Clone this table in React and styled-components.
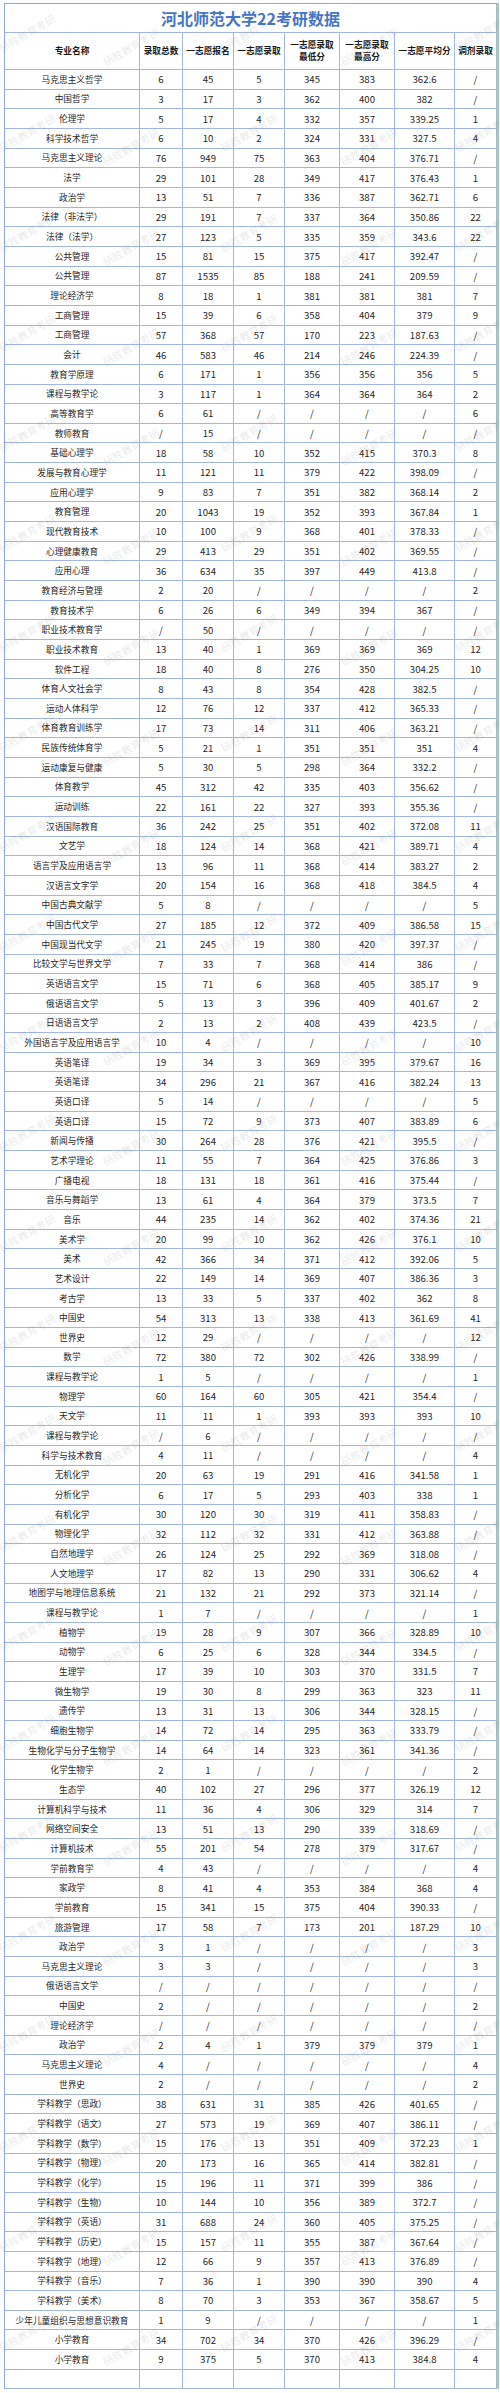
import styled, { createGlobalStyle } from 'styled-components'

const GlobalStyle = createGlobalStyle`
    html, body {
        margin: 0;
        padding: 0;
        background: #ffffff;
    }
    body {
        font-family: "Noto Sans CJK SC", "Noto Sans", sans-serif;
        color: #222222;
    }
`

const COLUMNS = '135px 43px 51px 51px 55px 55px 60px 42px'
const LINE = '#a3b6e3'

const HEADERS = [
    ['专业名称'],
    ['录取总数'],
    ['一志愿报名'],
    ['一志愿录取'],
    ['一志愿录取', '最低分'],
    ['一志愿录取', '最高分'],
    ['一志愿平均分'],
    ['调剂录取'],
]

const RAW = `马克思主义哲学 6 45 5 345 383 362.6 /
中国哲学 3 17 3 362 400 382 /
伦理学 5 17 4 332 357 339.25 1
科学技术哲学 6 10 2 324 331 327.5 4
马克思主义理论 76 949 75 363 404 376.71 /
法学 29 101 28 349 417 376.43 1
政治学 13 51 7 336 387 362.71 6
法律（非法学） 29 191 7 337 364 350.86 22
法律（法学） 27 123 5 335 359 343.6 22
公共管理 15 81 15 375 417 392.47 /
公共管理 87 1535 85 188 241 209.59 /
理论经济学 8 18 1 381 381 381 7
工商管理 15 39 6 358 404 379 9
工商管理 57 368 57 170 223 187.63 /
会计 46 583 46 214 246 224.39 /
教育学原理 6 171 1 356 356 356 5
课程与教学论 3 117 1 364 364 364 2
高等教育学 6 61 / / / / 6
教师教育 / 15 / / / / /
基础心理学 18 58 10 352 415 370.3 8
发展与教育心理学 11 121 11 379 422 398.09 /
应用心理学 9 83 7 351 382 368.14 2
教育管理 20 1043 19 352 393 367.84 1
现代教育技术 10 100 9 368 401 378.33 /
心理健康教育 29 413 29 351 402 369.55 /
应用心理 36 634 35 397 449 413.8 /
教育经济与管理 2 20 / / / / 2
教育技术学 6 26 6 349 394 367 /
职业技术教育学 / 50 / / / / /
职业技术教育 13 40 1 369 369 369 12
软件工程 18 40 8 276 350 304.25 10
体育人文社会学 8 43 8 354 428 382.5 /
运动人体科学 12 76 12 337 412 365.33 /
体育教育训练学 17 73 14 311 406 363.21 /
民族传统体育学 5 21 1 351 351 351 4
运动康复与健康 5 30 5 298 364 332.2 /
体育教学 45 312 42 335 403 356.62 /
运动训练 22 161 22 327 393 355.36 /
汉语国际教育 36 242 25 351 402 372.08 11
文艺学 18 124 14 368 421 389.71 4
语言学及应用语言学 13 96 11 368 414 383.27 2
汉语言文字学 20 154 16 368 418 384.5 4
中国古典文献学 5 8 / / / / 5
中国古代文学 27 185 12 372 409 386.58 15
中国现当代文学 21 245 19 380 420 397.37 /
比较文学与世界文学 7 33 7 368 414 386 /
英语语言文学 15 71 6 368 405 385.17 9
俄语语言文学 5 13 3 396 409 401.67 2
日语语言文学 2 13 2 408 439 423.5 /
外国语言学及应用语言学 10 4 / / / / 10
英语笔译 19 34 3 369 395 379.67 16
英语笔译 34 296 21 367 416 382.24 13
英语口译 5 14 / / / / 5
英语口译 15 72 9 373 407 383.89 6
新闻与传播 30 264 28 376 421 395.5 /
艺术学理论 11 55 7 364 425 376.86 3
广播电视 18 131 18 361 416 375.44 /
音乐与舞蹈学 13 61 4 364 379 373.5 7
音乐 44 235 14 362 402 374.36 21
美术学 20 99 10 362 426 376.1 10
美术 42 366 34 371 412 392.06 5
艺术设计 22 149 14 369 407 386.36 3
考古学 13 33 5 337 402 362 8
中国史 54 313 13 338 413 361.69 41
世界史 12 29 / / / / 12
数学 72 380 72 302 426 338.99 /
课程与教学论 1 5 / / / / 1
物理学 60 164 60 305 421 354.4 /
天文学 11 11 1 393 393 393 10
课程与教学论 / 6 / / / / /
科学与技术教育 4 11 / / / / 4
无机化学 20 63 19 291 416 341.58 1
分析化学 6 17 5 293 403 338 1
有机化学 30 120 30 319 411 358.83 /
物理化学 32 112 32 331 412 363.88 /
自然地理学 26 124 25 292 369 318.08 /
人文地理学 17 82 13 290 331 306.62 4
地图学与地理信息系统 21 132 21 292 373 321.14 /
课程与教学论 1 7 / / / / 1
植物学 19 28 9 307 366 328.89 10
动物学 6 25 6 328 344 334.5 /
生理学 17 39 10 303 370 331.5 7
微生物学 19 30 8 299 363 323 11
遗传学 13 31 13 306 344 328.15 /
细胞生物学 14 72 14 295 363 333.79 /
生物化学与分子生物学 14 64 14 323 361 341.36 /
化学生物学 2 1 / / / / 2
生态学 40 102 27 296 377 326.19 12
计算机科学与技术 11 36 4 306 329 314 7
网络空间安全 13 51 13 290 339 318.69 /
计算机技术 55 201 54 278 379 317.67 /
学前教育学 4 43 / / / / 4
家政学 8 41 4 353 384 368 4
学前教育 15 341 15 375 404 390.33 /
旅游管理 17 58 7 173 201 187.29 10
政治学 3 1 / / / / 3
马克思主义理论 3 3 / / / / 3
俄语语言文学 / / / / / / /
中国史 2 / / / / / 2
理论经济学 / / / / / / /
政治学 2 4 1 379 379 379 1
马克思主义理论 4 / / / / / 4
世界史 2 / / / / / 2
学科教学（思政） 38 631 31 385 426 401.65 /
学科教学（语文） 27 573 19 369 407 386.11 /
学科教学（数学） 15 176 13 351 409 372.23 1
学科教学（物理） 20 173 16 365 414 382.81 /
学科教学（化学） 15 196 11 371 399 386 /
学科教学（生物） 10 144 10 356 389 372.7 /
学科教学（英语） 31 688 24 360 405 375.25 /
学科教学（历史） 15 157 11 355 387 367.64 /
学科教学（地理） 12 66 9 357 413 376.89 /
学科教学（音乐） 7 36 1 390 390 390 4
学科教学（美术） 8 70 3 353 367 358.67 5
少年儿童组织与思想意识教育 1 9 / / / / 1
小学教育 34 702 34 370 426 396.29 /
小学教育 9 375 5 370 413 384.8 4`

const rows = RAW.split('\n').map(line => line.trim().split(' '))

const WM_X = [-4, 100, 218, 338, 452]
const marks = []
for (let y = 12; y < 2393; y += 100) {
    WM_X.forEach((x, i) => {
        marks.push({ x, y: y + (i % 2 ? 14 : 0) })
    })
}

const App = () => {
    return (
        <Page>
            <GlobalStyle />
            <Sheet>
                <TitleRow>河北师范大学22考研数据</TitleRow>
                <HeaderRow>
                    {HEADERS.map((lines, i) => (
                        <HeadCell key={i}>
                            {lines.map(l => (
                                <span key={l}>{l}</span>
                            ))}
                        </HeadCell>
                    ))}
                </HeaderRow>
                {rows.map((cells, r) => (
                    <Row key={r}>
                        {cells.map((c, i) => (
                            <Cell key={i} $name={i === 0}>
                                {c}
                            </Cell>
                        ))}
                    </Row>
                ))}
                <Row>
                    {HEADERS.map((_, i) => (
                        <Cell key={i} />
                    ))}
                </Row>
            </Sheet>
            <Watermarks>
                {marks.map((m, i) => (
                    <Mark key={i} style={{ left: m.x, top: m.y }}>
                        研胜教育考研
                    </Mark>
                ))}
            </Watermarks>
        </Page>
    )
}

const Page = styled.div`
    position: relative;
    width: 500px;
    height: 2393px;
    padding: 3px 0 0 4px;
    box-sizing: border-box;
    overflow: hidden;
    background: #ffffff;
`

const Sheet = styled.div`
    width: 493px;
    border-top: 1px solid #8ea6dc;
    border-left: 1px solid #8ea6dc;
    box-sizing: border-box;
    box-shadow: 2px 0 0 #a9d18e;
`

const TitleRow = styled.div`
    height: 29px;
    box-sizing: border-box;
    border-bottom: 1px solid ${LINE};
    border-right: 1px solid ${LINE};
    display: flex;
    align-items: center;
    justify-content: center;
    font-size: 16px;
    font-weight: 700;
    color: #4675c6;
    letter-spacing: 0;
`

const HeaderRow = styled.div`
    display: grid;
    grid-template-columns: ${COLUMNS};
    height: 37px;
    box-sizing: border-box;
    border-bottom: 1px solid ${LINE};
`

const HeadCell = styled.div`
    display: flex;
    flex-direction: column;
    align-items: center;
    justify-content: center;
    border-right: 1px solid ${LINE};
    font-size: 8.7px;
    font-weight: 700;
    line-height: 12.5px;
    color: #1a1a1a;
    white-space: nowrap;
`

const Row = styled.div`
    display: grid;
    grid-template-columns: ${COLUMNS};
    height: 19.66px;
    box-sizing: border-box;
    border-bottom: 1px solid ${LINE};
`

const Cell = styled.div`
    display: flex;
    align-items: center;
    justify-content: center;
    border-right: 1px solid ${LINE};
    font-size: ${p => (p.$name ? '8.7px' : '9.6px')};
    color: #262626;
    white-space: nowrap;
    overflow: hidden;
`

const Watermarks = styled.div`
    position: absolute;
    inset: 0;
    pointer-events: none;
    overflow: hidden;
`

const Mark = styled.span`
    position: absolute;
    font-family: "Noto Sans CJK SC", sans-serif;
    font-size: 10.5px;
    color: rgba(110, 110, 110, 0.16);
    transform: rotate(-30deg);
    transform-origin: left top;
    white-space: nowrap;
    margin-top: 30px;
`

export default App
